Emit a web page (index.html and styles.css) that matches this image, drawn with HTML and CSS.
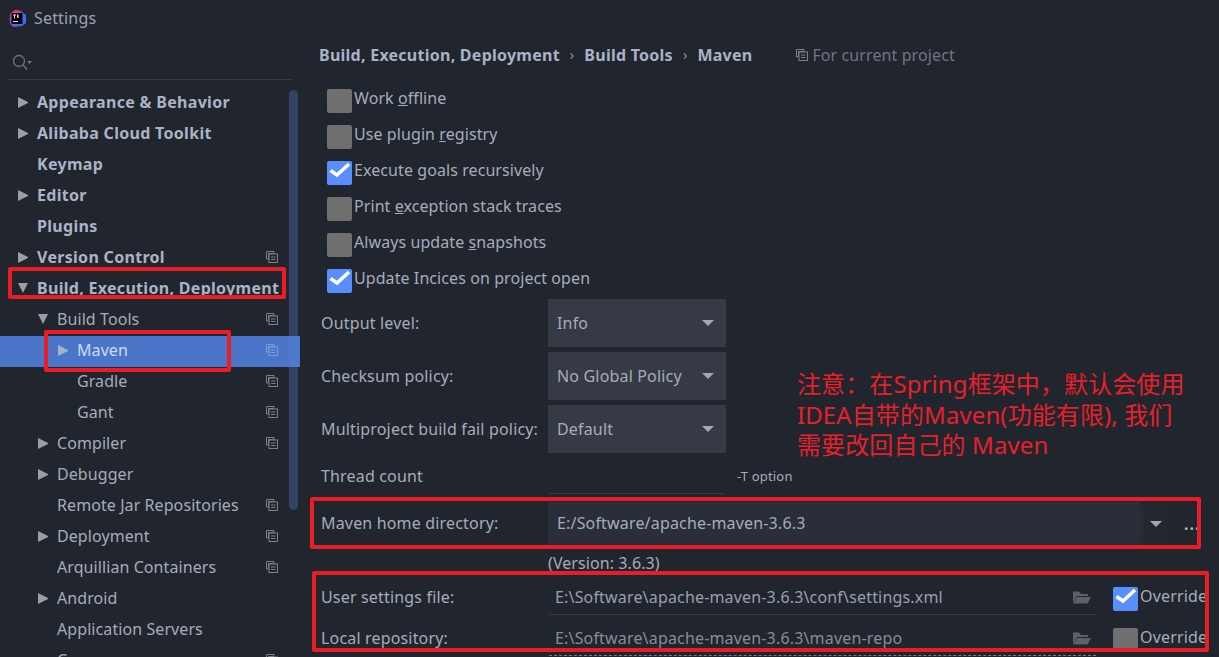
FILE: index.html
```html
<!DOCTYPE html>
<html lang="en">
<head>
<meta charset="utf-8">
<title>Settings</title>
<link rel="stylesheet" href="styles.css">
</head>
<body>
<svg class="defs" width="0" height="0" aria-hidden="true">
  <symbol id="proj" viewBox="0 0 12 12">
    <path d="M.5.5h7.500v2H2.500v5.500h-2z" fill="none" stroke="currentColor"/>
    <rect x="3" y="3" width="8.500" height="8.500" fill="none" stroke="currentColor"/>
    <path d="M5 6h4.500M5 8.500h4.500" stroke="currentColor"/>
  </symbol>
  <symbol id="folder" viewBox="0 0 19 14">
    <path d="M1 13V1.500h6l2 2.500h7v2H5z" fill="#5d6167"/>
    <path d="M1 13.500L5 7h14l-3.500 6.500z" fill="#5d6167"/>
  </symbol>
  <symbol id="check" viewBox="0 0 25 24">
    <path d="M3.500 9.500l6.500 4.500L22 3" fill="none" stroke="#fff" stroke-width="3.500"/>
  </symbol>
</svg>
<div class="app">
  <div class="menubar"><div class="menu-inner"><span>File</span><span>View</span><span>Navigate</span><span>Code</span><span>Analyze</span><span>Refactor</span><span>Build</span><span>Run</span><span>Tools</span><span>VCS</span><span>Window</span><span>Help</span></div></div>
  <header class="titlebar">
    <svg class="logo" width="17" height="17" viewBox="0 0 17 17">
      <path d="M1 4L6 0l6 1 5 4v8l-4 3-8 1-4-3z" fill="#3b6cf0"/>
      <path d="M1 4L6 0l6 1-6 6-4 1z" fill="#f0326e"/>
      <path d="M0 8l3 8 3 1 2-6z" fill="#a83cd8"/>
      <rect x="2.500" y="3" width="11" height="11" fill="#000"/>
      <rect x="4" y="11" width="5" height="1" fill="#ddd"/>
      <path d="M4 4.500h3v1H6v3H5v-3H4zM8 4.500h1.500v3.500H8z" fill="#ddd"/>
    </svg>
    <span class="title">Settings</span>
  </header>
  <div class="main">
    <nav class="sidebar">
      <div class="search">
        <svg width="20" height="18" viewBox="0 0 20 18"><circle cx="6" cy="9" r="5.500" fill="none" stroke="#70757d" stroke-width="1.300"/><path d="M10 13l4 4.500" stroke="#70757d" stroke-width="1.300"/><path d="M14 9h5l-2.500 3z" fill="#70757d"/></svg>
      </div>
      <ul class="tree">
        <li class="row l1 bold"><i class="arrow right"></i><span class="name">Appearance &amp; Behavior</span></li>
        <li class="row l1 bold"><i class="arrow right"></i><span class="name">Alibaba Cloud Toolkit</span></li>
        <li class="row l1 bold"><i class="arrow"></i><span class="name">Keymap</span></li>
        <li class="row l1 bold"><i class="arrow right"></i><span class="name">Editor</span></li>
        <li class="row l1 bold"><i class="arrow"></i><span class="name">Plugins</span></li>
        <li class="row l1 bold"><i class="arrow right"></i><span class="name">Version Control</span><svg class="pi"><use href="#proj"/></svg></li>
        <li class="row l1 bold"><i class="arrow down"></i><span class="name">Build, Execution, Deployment</span></li>
        <li class="row l2"><i class="arrow down"></i><span class="name">Build Tools</span><svg class="pi"><use href="#proj"/></svg></li>
        <li class="row l3 selected"><i class="arrow right"></i><span class="name">Maven</span><svg class="pi"><use href="#proj"/></svg></li>
        <li class="row l3"><i class="arrow"></i><span class="name">Gradle</span><svg class="pi"><use href="#proj"/></svg></li>
        <li class="row l3"><i class="arrow"></i><span class="name">Gant</span><svg class="pi"><use href="#proj"/></svg></li>
        <li class="row l2"><i class="arrow right"></i><span class="name">Compiler</span><svg class="pi"><use href="#proj"/></svg></li>
        <li class="row l2"><i class="arrow right"></i><span class="name">Debugger</span></li>
        <li class="row l2"><i class="arrow"></i><span class="name">Remote Jar Repositories</span><svg class="pi"><use href="#proj"/></svg></li>
        <li class="row l2"><i class="arrow right"></i><span class="name">Deployment</span><svg class="pi"><use href="#proj"/></svg></li>
        <li class="row l2"><i class="arrow"></i><span class="name">Arquillian Containers</span><svg class="pi"><use href="#proj"/></svg></li>
        <li class="row l2"><i class="arrow right"></i><span class="name">Android</span></li>
        <li class="row l2"><i class="arrow"></i><span class="name">Application Servers</span></li>
        <li class="row l2"><i class="arrow"></i><span class="name">Coverage</span><svg class="pi"><use href="#proj"/></svg></li>
      </ul>
      <div class="scrollthumb"></div>
    </nav>
    <section class="content">
      <div class="crumbs">
        <b>Build, Execution, Deployment</b><span class="sep">›</span><b>Build Tools</b><span class="sep">›</span><b>Maven</b>
        <span class="scope"><svg class="pi"><use href="#proj"/></svg>For current project</span>
      </div>
      <div class="checks">
        <label class="check"><span class="box"></span><span class="tx">Work <u>o</u>ffline</span></label>
        <label class="check"><span class="box"></span><span class="tx">Use plugin <u>r</u>egistry</span></label>
        <label class="check"><span class="box on"><svg width="25" height="24"><use href="#check"/></svg></span><span class="tx">Execute <u>g</u>oals recursively</span></label>
        <label class="check"><span class="box"></span><span class="tx">Print <u>e</u>xception stack traces</span></label>
        <label class="check"><span class="box"></span><span class="tx">Always update <u>s</u>napshots</span></label>
        <label class="check"><span class="box on"><svg width="25" height="24"><use href="#check"/></svg></span><span class="tx">Update Incices on project open</span></label>
      </div>
      <div class="combos">
        <div class="form-row"><span class="lbl">Output level:</span><div class="combo">Info<i class="caret"></i></div></div>
        <div class="form-row"><span class="lbl">Checksum policy:</span><div class="combo">No Global Policy<i class="caret"></i></div></div>
        <div class="form-row"><span class="lbl">Multiproject build fail policy:</span><div class="combo">Default<i class="caret"></i></div></div>
      </div>
      <div class="form-row thread"><span class="lbl">Thread count</span><div class="thread-input"></div><span class="hint">-T option</span></div>
      <div class="form-row home">
        <span class="lbl">Maven home directory:</span>
        <div class="home-field"><span class="lift">E:/Software/apache-maven-3.6.3</span></div>
        <div class="home-drop"><i class="caret"></i></div>
        <div class="home-more">...</div>
      </div>
      <div class="version">(Version: 3.6.3)</div>
      <div class="form-row path user">
        <span class="lbl">User settings file:</span>
        <div class="path-field">E:\Software\apache-maven-3.6.3\conf\settings.xml<svg class="folder"><use href="#folder"/></svg></div>
        <label class="check over"><span class="box on"><svg width="25" height="24"><use href="#check"/></svg></span><span class="tx">Override</span></label>
      </div>
      <div class="form-row path local">
        <span class="lbl">Local repository:</span>
        <div class="path-field dim">E:\Software\apache-maven-3.6.3\maven-repo<svg class="folder"><use href="#folder"/></svg></div>
        <label class="check over"><span class="box"></span><span class="tx">Override</span></label>
      </div>
    </section>
  </div>
  <div class="note">注意：在Spring框架中，默认会使用<br>IDEA自带的Maven(功能有限), 我们<br>需要改回自己的 Maven</div>
  <div class="mark mark-build"></div>
  <div class="mark mark-maven"></div>
  <div class="mark mark-home"></div>
  <div class="mark mark-paths"></div>
</div>
</body>
</html>
```
FILE: styles.css
```css
* { box-sizing: border-box; }
html, body { margin: 0; padding: 0; }
body { background: #21252e; }
.defs { position: absolute; }
.app {
  position: relative;
  display: flex;
  flex-direction: column;
  width: 1219px;
  height: 657px;
  overflow: hidden;
  background: #21252e;
  color: #a5adbc;
  font: 16px/22px "Noto Sans", "Noto Sans CJK SC", sans-serif;
  letter-spacing: .17px;
}
.menubar { height: 2px; overflow: hidden; }
.menu-inner {
  display: flex;
  gap: 22px;
  margin-top: -20px;
  padding-left: 4px;
  color: #a8aeb8;
  font-size: 14px;
}
.titlebar { display: flex; align-items: center; height: 33px; padding-left: 9px; }
.logo { margin-right: 8px; margin-bottom: 1px; }
.title { padding-bottom: 2px; color: #9aa3b2; }
.main { display: flex; flex: 1; min-height: 0; }

.sidebar { position: relative; flex: none; width: 300px; overflow: hidden; }
.search {
  display: flex;
  align-items: center;
  height: 45px;
  margin: 0 8px 0 7px;
  padding: 8px 0 0 6px;
  border-bottom: 1px solid #363a44;
}
.tree { margin: 8px 0 0; padding: 0; list-style: none; letter-spacing: .08px; }
.row { display: flex; align-items: center; height: 31px; }
.l1 { padding-left: 18px; }
.l2 { padding-left: 38px; }
.l3 { padding-left: 58px; }
.bold { color: #aab4c6; font-weight: 700; letter-spacing: .3px; }
.arrow { flex: none; width: 19px; height: 11px; margin-bottom: 3px; }
.arrow.right {
  width: 0;
  margin-right: 9px;
  border-left: 10px solid #9b9ea4;
  border-top: 5.5px solid transparent;
  border-bottom: 5.5px solid transparent;
}
.arrow.down {
  width: 0;
  height: 0;
  margin-right: 9px;
  border-top: 10px solid #9b9ea4;
  border-left: 5.5px solid transparent;
  border-right: 5.5px solid transparent;
}
.name { flex: 1; padding-bottom: 4px; white-space: nowrap; }
.pi { flex: none; width: 12px; height: 12px; color: #7d8085; }
.row .pi { margin-right: 22px; margin-bottom: 3px; }
.selected { background: #4a75c9; color: #cfdaf0; }
.selected .arrow.right { border-left-color: #a4b2cc; }
.selected .pi { color: #7f9bd6; }
.scrollthumb {
  position: absolute;
  top: 55px;
  right: 2px;
  width: 9px;
  height: 420px;
  border-radius: 5px;
  background: rgba(90, 130, 210, .32);
}

.content { flex: 1; min-width: 0; padding-left: 21px; }
.crumbs {
  display: flex;
  align-items: center;
  height: 24px;
  margin: 8px 0 16px -2px;
  color: #a9b3c6;
}
.crumbs b { letter-spacing: .25px; }
.sep { margin: 0 10px; color: #8b919c; font-size: 14px; }
.scope { display: flex; align-items: center; margin-left: 44px; color: #6f7683; letter-spacing: .1px; }
.scope .pi { margin-right: 4px; }
.checks { display: flex; flex-direction: column; letter-spacing: .08px; }
.check { display: flex; align-items: center; height: 36px; margin-left: 6px; }
.tx { padding-bottom: 6px; white-space: nowrap; }
.box {
  flex: none;
  width: 25px;
  height: 24px;
  margin-right: 2px;
  border-radius: 2px;
  background: #6f6f6f;
}
.box.on { background: #5a8eff; }
.box svg { display: block; }
.form-row { display: flex; align-items: center; }
.lbl { flex: none; width: 227px; white-space: nowrap; }
.combos { display: flex; flex-direction: column; gap: 5px; }
.combo {
  display: flex;
  align-items: center;
  justify-content: space-between;
  width: 178px;
  height: 48px;
  padding: 0 12px 0 9px;
  background: #363a44;
}
.caret {
  flex: none;
  width: 0;
  height: 0;
  border-top: 6px solid #a2a7b0;
  border-left: 6px solid transparent;
  border-right: 6px solid transparent;
}
.thread { align-items: stretch; height: 41px; }
.thread .lbl { padding-top: 12px; }
.thread-input { width: 175px; margin-left: 1px; border-bottom: 1px solid #363a44; }
.hint { margin-left: 13px; padding-top: 12px; font-size: 13px; }
.home { height: 43px; margin-top: 8px; }
.home .lbl, .lift { padding-bottom: 2px; }
.home-field {
  display: flex;
  align-items: center;
  width: 593px;
  height: 100%;
  padding-left: 9px;
  background: #2a2e38;
}
.home-drop {
  display: flex;
  align-items: center;
  justify-content: center;
  width: 27px;
  height: 38px;
  margin-left: 1px;
  border-left: 1px solid #2b2f38;
  background: #24272f;
}
.home-more {
  flex: none;
  width: 23px;
  margin-left: 15px;
  color: #a9b0bd;
  font-weight: 700;
  letter-spacing: 1px;
  line-height: 1;
}
.version { height: 22px; margin: 7px 0 0 227px; line-height: 22px; letter-spacing: .08px; }
.path-field {
  display: flex;
  align-items: center;
  justify-content: space-between;
  width: 547px;
  height: 100%;
  margin-left: 1px;
  padding: 0 5px 0 6px;
  color: #98a0ae;
}
.folder { flex: none; width: 19px; height: 14px; }
.user { height: 35px; margin-top: 6px; }
.user .lbl { padding-bottom: 2px; }
.user .path-field { border-bottom: 1px solid #363a44; }
.local { height: 41px; }
.local .lbl { padding-top: 5px; }
.local .path-field { padding-top: 5px; border-bottom: 1px dashed #7a7d84; color: #868d9a; }
.over { margin-left: 17px; }
.user .over { padding-top: 3px; }
.local .over { height: 41px; padding-top: 9px; }
.note {
  position: absolute;
  top: 369px;
  left: 797px;
  color: #e8202b;
  font: 24px/30.500px "Noto Sans", "Noto Sans CJK SC", sans-serif;
  letter-spacing: .1px;
  white-space: nowrap;
}
.mark { position: absolute; border: 4px solid #ea1c25; border-radius: 2px; }
.mark-build { top: 267px; left: 8px; width: 278px; height: 32px; }
.mark-maven { top: 330px; left: 44px; width: 187px; height: 42px; }
.mark-home { top: 497px; left: 310px; width: 891px; height: 52px; }
.mark-paths { top: 571px; left: 312px; width: 897px; height: 81px; }
```
